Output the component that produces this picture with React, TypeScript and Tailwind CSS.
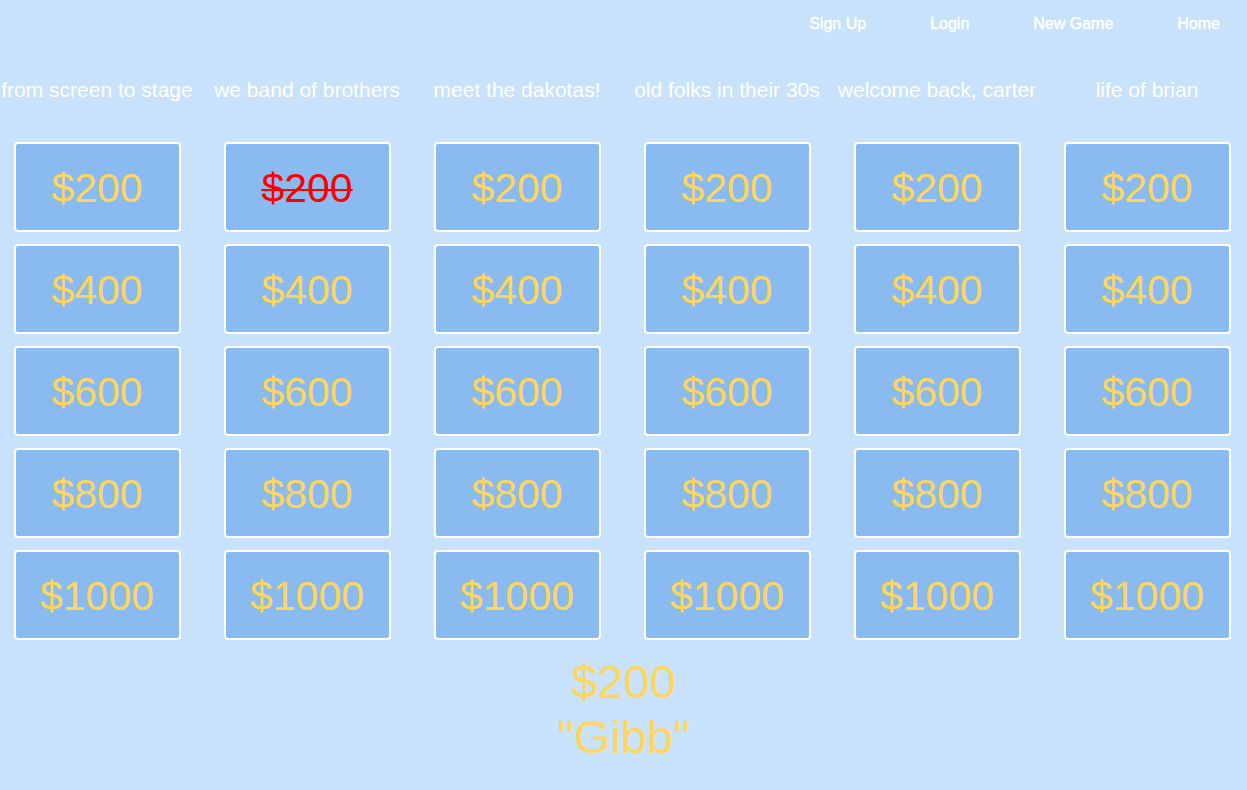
import React from "react";

const categories = [
  "from screen to stage",
  "we band of brothers",
  "meet the dakotas!",
  "old folks in their 30s",
  "welcome back, carter",
  "life of brian",
];

const values = [200, 400, 600, 800, 1000];

const navLinks = ["Sign Up", "Login", "New Game", "Home"];

export default function App() {
  return (
    <div
      className="min-h-[790px] w-full bg-[#c8e2fc] overflow-hidden"
      style={{ fontFamily: '"Liberation Sans", Arial, sans-serif' }}
    >
      <nav className="flex justify-end items-center gap-[64px] pr-[27px] pt-[14px] h-[34px]">
        {navLinks.map((link) => (
          <a
            key={link}
            className="text-white text-[16px] leading-[18px] cursor-pointer [-webkit-text-stroke:0.4px_white]"
          >
            {link}
          </a>
        ))}
      </nav>

      <div className="grid grid-cols-[repeat(6,194px)] gap-x-4 mt-[44px]">
        {categories.map((cat, ci) => (
          <div key={cat} className="flex flex-col items-center">
            <div className="text-white text-[21px] leading-[24px] whitespace-nowrap mb-[40px]">
              {cat}
            </div>
            <div className="flex flex-col gap-[12px] w-[167px]">
              {values.map((v) => {
                const used = ci === 1 && v === 200;
                return (
                  <button
                    key={v}
                    className="h-[90px] rounded-[4px] border-2 border-white bg-[#8abbf0] flex items-center justify-center"
                  >
                    <span
                      className={
                        used
                          ? "text-[41px] leading-[48px] pt-[2px] text-[#ff0000] line-through decoration-2"
                          : "text-[41px] leading-[48px] pt-[2px] text-[#ffd65c]"
                      }
                    >
                      ${v}
                    </span>
                  </button>
                );
              })}
            </div>
          </div>
        ))}
      </div>

      <div className="flex flex-col items-center mt-[14px] text-[#ffd65c] text-[47px] leading-[55px]">
        <div>$200</div>
        <div>"Gibb"</div>
      </div>
    </div>
  );
}
